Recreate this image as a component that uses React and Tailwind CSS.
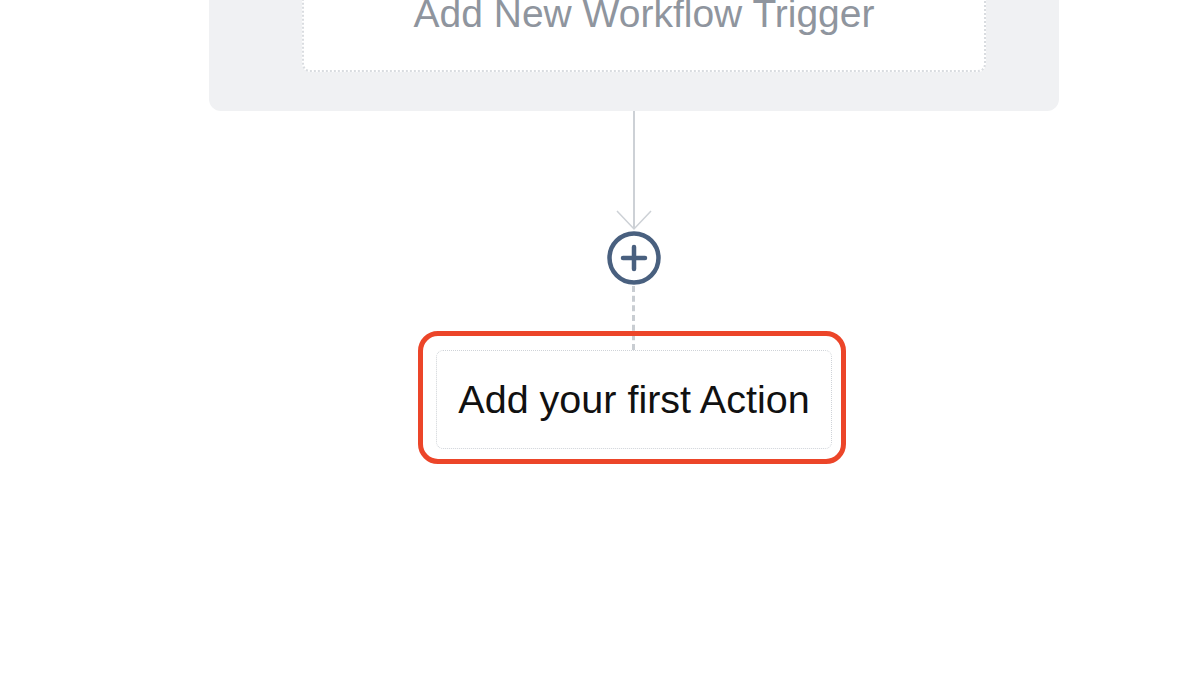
import React from "react";

const font = { fontFamily: '"Liberation Sans", Arial, sans-serif' };

const Connector = () => (
  <svg width="40" height="120" viewBox="0 0 40 120" className="block">
    <line x1="20" y1="0" x2="20" y2="118" stroke="#cdd1d6" strokeWidth="2" />
    <polyline
      points="3,100 20,118 37,100"
      fill="none"
      stroke="#cdd1d6"
      strokeWidth="1.5"
    />
  </svg>
);

const PlusButton = () => (
  <button className="block">
    <svg width="56" height="56" viewBox="0 0 56 56" className="block">
      <circle cx="28" cy="28" r="24.5" fill="white" stroke="#49607f" strokeWidth="4.5" />
      <line x1="17" y1="28" x2="39" y2="28" stroke="#49607f" strokeWidth="4.5" strokeLinecap="round" />
      <line x1="28" y1="17" x2="28" y2="39" stroke="#49607f" strokeWidth="4.5" strokeLinecap="round" />
    </svg>
  </button>
);

export default function App() {
  return (
    <div className="w-full h-[676px] bg-white overflow-hidden" style={font}>
      <div className="flex flex-col items-center pl-[68px]">
        {/* trigger panel */}
        <div className="-mt-[78px] w-[850px] bg-[#f0f1f3] rounded-[12px] pt-[30px] pb-[39px] pl-[93px] pr-[73px]">
          <div className="bg-white rounded-[8px] border-2 border-dotted border-[#d9dce0] pt-[40px] pb-[37px] flex justify-center">
            <span className="text-[39px] leading-none text-[#8f959e]">
              Add New Workflow Trigger
            </span>
          </div>
        </div>

        <Connector />
        <div className="-mt-[1px]">
          <PlusButton />
        </div>

        {/* dashed link to first action */}
        <div className="h-[64px] border-l-[3px] border-dashed border-[#c9cdd2] -ml-[1px]" />

        {/* first action */}
        <div className="relative">
          <div className="w-[396px] h-[99px] rounded-[7px] border border-dotted border-[#cfd3d8] bg-white flex items-center justify-center">
            <span className="text-[39.5px] leading-none text-[#111111]">
              Add your first Action
            </span>
          </div>
          <div className="absolute -left-[18px] -right-[14px] -top-[19px] -bottom-[15px] rounded-[20px] border-[5px] border-[#ec4529] pointer-events-none" />
        </div>
      </div>
    </div>
  );
}
